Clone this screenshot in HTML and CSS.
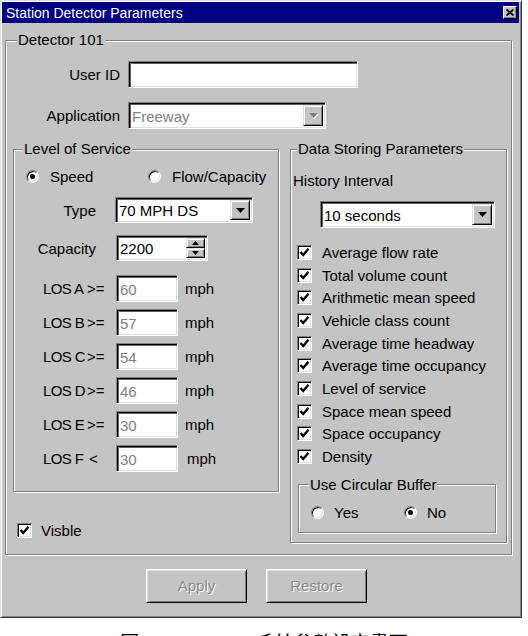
FILE: index.html
```html
<!DOCTYPE html>
<html lang="en">
<head>
<meta charset="utf-8">
<title>Station Detector Parameters</title>
<link rel="stylesheet" href="styles.css">
</head>
<body>
<div class="window">
  <div class="titlebar">
    <span class="title">Station Detector Parameters</span>
    <span class="close-btn">
      <svg width="8" height="7" viewBox="0 0 8 7"><path d="M0.5 0.5 L7.5 6.5 M7.5 0.5 L0.5 6.5" stroke="#000" stroke-width="1.8" fill="none"/></svg>
    </span>
  </div>

  <div class="client">
    <fieldset class="group detector">
      <legend>Detector 101</legend>
      <div class="detector-body">
        <div class="form-row">
          <span class="lbl">User ID</span>
          <div class="field userid"></div>
        </div>
        <div class="form-row app-row">
          <span class="lbl">Application</span>
          <div class="field combo app-combo disabled">
            <span class="combo-text">Freeway</span>
            <span class="drop-btn"><svg width="9" height="5" viewBox="0 0 9 5"><path d="M0 0 H9 L4.5 5 Z"/></svg></span>
          </div>
        </div>

        <div class="columns">
          <div class="col-left">
            <fieldset class="group los">
              <legend>Level of Service</legend>
              <div class="los-body">
                <div class="radio-row">
                  <span class="option speed-opt"><span class="radio on"></span><span>Speed</span></span>
                  <span class="option"><span class="radio"></span><span>Flow/Capacity</span></span>
                </div>
                <div class="param-row">
                  <span class="plbl">Type</span>
                  <div class="field combo type-combo">
                    <span class="combo-text">70 MPH DS</span>
                    <span class="drop-btn"><svg width="9" height="5" viewBox="0 0 9 5"><path d="M0 0 H9 L4.5 5 Z"/></svg></span>
                  </div>
                </div>
                <div class="param-row cap-row">
                  <span class="plbl">Capacity</span>
                  <div class="field spinner">
                    <span class="combo-text">2200</span>
                    <span class="spin">
                      <span class="spin-btn"><svg width="7" height="4" viewBox="0 0 7 4"><path d="M0 4 H7 L3.5 0 Z"/></svg></span>
                      <span class="spin-btn"><svg width="7" height="4" viewBox="0 0 7 4"><path d="M0 0 H7 L3.5 4 Z"/></svg></span>
                    </span>
                  </div>
                </div>
                <div class="los-grid">
                  <span class="los-name">LOS A</span><span class="op">&gt;=</span><div class="field los-field">60</div><span class="unit">mph</span>
                  <span class="los-name">LOS B</span><span class="op">&gt;=</span><div class="field los-field">57</div><span class="unit">mph</span>
                  <span class="los-name">LOS C</span><span class="op">&gt;=</span><div class="field los-field">54</div><span class="unit">mph</span>
                  <span class="los-name">LOS D</span><span class="op">&gt;=</span><div class="field los-field">46</div><span class="unit">mph</span>
                  <span class="los-name">LOS E</span><span class="op">&gt;=</span><div class="field los-field">30</div><span class="unit">mph</span>
                  <span class="los-name">LOS F</span><span class="op lt">&lt;</span><div class="field los-field">30</div><span class="unit unit-f">mph</span>
                </div>
              </div>
            </fieldset>
            <div class="check-row visible-row">
              <span class="check-box"><svg width="11" height="11" viewBox="0 0 11 11"><path d="M1.5 5 L4.2 8 L9.5 1.8" stroke="#000" stroke-width="2.4" fill="none"/></svg></span>
              <span>Visble</span>
            </div>
          </div>

          <fieldset class="group dsp">
            <legend>Data Storing Parameters</legend>
            <div class="dsp-body">
              <div class="history">History Interval</div>
              <div class="field combo interval-combo">
                <span class="combo-text">10 seconds</span>
                <span class="drop-btn"><svg width="9" height="5" viewBox="0 0 9 5"><path d="M0 0 H9 L4.5 5 Z"/></svg></span>
              </div>
              <div class="check-list">
                <div class="check-row"><span class="check-box"><svg width="11" height="11" viewBox="0 0 11 11"><path d="M1.5 5 L4.2 8 L9.5 1.8" stroke="#000" stroke-width="2.4" fill="none"/></svg></span><span>Average flow rate</span></div>
                <div class="check-row"><span class="check-box"><svg width="11" height="11" viewBox="0 0 11 11"><path d="M1.5 5 L4.2 8 L9.5 1.8" stroke="#000" stroke-width="2.4" fill="none"/></svg></span><span>Total volume count</span></div>
                <div class="check-row"><span class="check-box"><svg width="11" height="11" viewBox="0 0 11 11"><path d="M1.5 5 L4.2 8 L9.5 1.8" stroke="#000" stroke-width="2.4" fill="none"/></svg></span><span>Arithmetic mean speed</span></div>
                <div class="check-row"><span class="check-box"><svg width="11" height="11" viewBox="0 0 11 11"><path d="M1.5 5 L4.2 8 L9.5 1.8" stroke="#000" stroke-width="2.4" fill="none"/></svg></span><span>Vehicle class count</span></div>
                <div class="check-row"><span class="check-box"><svg width="11" height="11" viewBox="0 0 11 11"><path d="M1.5 5 L4.2 8 L9.5 1.8" stroke="#000" stroke-width="2.4" fill="none"/></svg></span><span>Average time headway</span></div>
                <div class="check-row"><span class="check-box"><svg width="11" height="11" viewBox="0 0 11 11"><path d="M1.5 5 L4.2 8 L9.5 1.8" stroke="#000" stroke-width="2.4" fill="none"/></svg></span><span>Average time occupancy</span></div>
                <div class="check-row"><span class="check-box"><svg width="11" height="11" viewBox="0 0 11 11"><path d="M1.5 5 L4.2 8 L9.5 1.8" stroke="#000" stroke-width="2.4" fill="none"/></svg></span><span>Level of service</span></div>
                <div class="check-row"><span class="check-box"><svg width="11" height="11" viewBox="0 0 11 11"><path d="M1.5 5 L4.2 8 L9.5 1.8" stroke="#000" stroke-width="2.4" fill="none"/></svg></span><span>Space mean speed</span></div>
                <div class="check-row"><span class="check-box"><svg width="11" height="11" viewBox="0 0 11 11"><path d="M1.5 5 L4.2 8 L9.5 1.8" stroke="#000" stroke-width="2.4" fill="none"/></svg></span><span>Space occupancy</span></div>
                <div class="check-row"><span class="check-box"><svg width="11" height="11" viewBox="0 0 11 11"><path d="M1.5 5 L4.2 8 L9.5 1.8" stroke="#000" stroke-width="2.4" fill="none"/></svg></span><span>Density</span></div>
              </div>
              <fieldset class="group circular">
                <legend>Use Circular Buffer</legend>
                <div class="circ-body">
                  <span class="option yes-opt"><span class="radio"></span><span>Yes</span></span>
                  <span class="option"><span class="radio on"></span><span>No</span></span>
                </div>
              </fieldset>
            </div>
          </fieldset>
        </div>
      </div>
    </fieldset>

    <div class="buttons">
      <span class="btn">Apply</span>
      <span class="btn">Restore</span>
    </div>
  </div>
</div>
<p class="caption">圖 3-7 Detector 系統參數設定畫面</p>
</body>
</html>
```

FILE: styles.css
```css
/* Classic dialog palette */
:root {
  --face: #c4c4c4;
  --shadow: #808080;
  --dark: #000;
  --light: #dfdfdf;
  --hilite: #fff;
}

body {
  margin: 0;
  background: #fff;
  font-family: "Liberation Sans", Arial, sans-serif;
  font-size: 15px;
  color: #000;
}

*, *::before, *::after { box-sizing: border-box; }

/* Window frame */
.window {
  width: 522px;
  height: 618px;
  background: var(--face);
  border: 1px solid;
  border-color: var(--light) #3a3a3a #3a3a3a var(--light);
  box-shadow: inset 1px 1px var(--hilite), inset -1px -1px var(--shadow);
  padding: 1px 2px 2px 1px;
}

.titlebar {
  height: 21px;
  background: #000080;
  color: #fff;
  font-size: 14px;
  display: flex;
  align-items: center;
  justify-content: space-between;
  padding: 0 2px 0 4px;
}

.close-btn {
  width: 14px;
  height: 13px;
  background: var(--face);
  border: 1px solid;
  border-color: var(--hilite) var(--dark) var(--dark) var(--hilite);
  box-shadow: inset -1px -1px var(--shadow);
  display: flex;
  align-items: center;
  justify-content: center;
}

.client {
  padding: 8px 0 0 3px;
}

/* Etched group boxes */
fieldset.group {
  margin: 0;
  padding: 0;
  min-width: 0;
  border: 1px solid var(--shadow);
  box-shadow: 1px 1px 0 var(--hilite), inset 1px 1px 0 var(--hilite);
}

fieldset.group > legend {
  padding: 0 1px;
  line-height: 18px;
  background: var(--face);
}

fieldset.detector { width: 507px; }
fieldset.detector > legend { margin-left: 11px; }
.detector-body { padding: 12px 3px 11px 7px; }

.form-row {
  display: flex;
  align-items: center;
  gap: 8px;
}
.app-row { margin-top: 14px; }
.lbl { width: 107px; text-align: right; }

/* Sunken edit fields */
.field {
  background: #fff;
  border: 1px solid;
  border-color: var(--shadow) var(--hilite) var(--hilite) var(--shadow);
  box-shadow: inset 1px 1px 0 #000, inset 2px 2px 0 #606060, inset -1px -1px 0 var(--light);
}

.userid { width: 230px; height: 27px; }

.combo, .spinner {
  display: flex;
  align-items: stretch;
  padding: 2px 2px 2px 3px;
}
.combo-text {
  flex: 1;
  display: flex;
  align-items: center;
  padding-top: 1px;
}
.disabled .combo-text { color: #808080; }

.drop-btn, .spin-btn {
  background: var(--face);
  border: 1px solid;
  border-color: var(--light) var(--dark) var(--dark) var(--light);
  box-shadow: inset 1px 1px var(--hilite), inset -1px -1px var(--shadow);
  display: flex;
  align-items: center;
  justify-content: center;
}
.drop-btn { width: 20px; }
.drop-btn svg, .spin-btn svg { fill: #000; }
.disabled .drop-btn svg { fill: #808080; filter: drop-shadow(1px 1px 0 #fff); }

.app-combo { width: 198px; height: 27px; }

.columns {
  display: flex;
  align-items: flex-start;
  gap: 11px;
  margin-top: 11px;
}

/* Level of Service */
.col-left { width: 266px; }
fieldset.los { width: 266px; }
fieldset.los > legend { margin-left: 9px; }
.los-body { padding: 10px 0 19px 0; }

.radio-row {
  display: flex;
  align-items: center;
  height: 17px;
  padding-left: 12px;
}
.option {
  display: flex;
  align-items: center;
  gap: 11px;
}
.speed-opt { width: 122px; }

.radio {
  flex: none;
  position: relative;
  width: 13px;
  height: 13px;
  border-radius: 50%;
  background: #fff;
  border: 1px solid;
  border-color: var(--shadow) var(--hilite) var(--hilite) var(--shadow);
  box-shadow: inset 1px 1px 0 #000, inset -1px -1px 0 var(--light);
}
.radio.on::after {
  content: "";
  position: absolute;
  left: 3px;
  top: 3px;
  width: 5px;
  height: 5px;
  border-radius: 50%;
  background: #000;
}

.param-row {
  display: flex;
  align-items: center;
  gap: 19px;
  margin-top: 12px;
}
.cap-row { gap: 20px; }
.plbl { width: 82px; text-align: right; }
.type-combo { width: 138px; height: 26px; }
.spinner { width: 92px; height: 26px; }
.spin {
  width: 19px;
  display: flex;
  flex-direction: column;
}
.spin-btn { flex: 1; }

.los-grid {
  display: grid;
  grid-template-columns: 43px 30px 62px auto;
  grid-auto-rows: 27px;
  row-gap: 7px;
  align-items: center;
  margin-top: 14px;
  padding-left: 29px;
  white-space: nowrap;
}
.los-name { letter-spacing: -0.6px; }
.op { padding-left: 1px; }
.lt { padding-left: 3px; }
.los-field {
  height: 27px;
  color: #808080;
  display: flex;
  align-items: center;
  padding: 1px 0 0 3px;
}
.unit { margin-left: 7px; }
.unit-f { margin-left: 9px; }

/* Check boxes */
.check-row {
  display: flex;
  align-items: center;
  gap: 10px;
}
.check-box {
  flex: none;
  width: 15px;
  height: 15px;
  background: #fff;
  border: 1px solid;
  border-color: var(--shadow) var(--hilite) var(--hilite) var(--shadow);
  box-shadow: inset 1px 1px 0 #000, inset -1px -1px 0 var(--light);
  display: flex;
  align-items: center;
  justify-content: center;
}
.visible-row {
  margin-top: 30px;
  padding-left: 4px;
  height: 16px;
  gap: 9px;
}

/* Data storing parameters */
fieldset.dsp { width: 217px; }
fieldset.dsp > legend { margin-left: 6px; }
.dsp-body { padding: 14px 0 9px 0; }
.history { line-height: 17px; padding-left: 2px; }
.interval-combo {
  width: 175px;
  height: 27px;
  margin: 12px 0 0 29px;
}
.check-list {
  margin-top: 13px;
  padding-left: 6px;
}
.check-list .check-row { height: 22.7px; }

fieldset.circular {
  width: 198px;
  margin: 8px 0 0 7px;
}
fieldset.circular > legend { margin-left: 10px; }
.circ-body {
  display: flex;
  align-items: center;
  height: 17px;
  box-sizing: content-box;
  padding: 10px 0 11px 12px;
}
.circ-body .option { gap: 10px; }
.yes-opt { width: 93px; }

/* Dialog buttons */
.buttons {
  display: flex;
  justify-content: center;
  gap: 19px;
  margin-top: 14px;
  padding-right: 11px;
}
.btn {
  width: 101px;
  height: 34px;
  display: flex;
  align-items: center;
  justify-content: center;
  border: 1px solid;
  border-color: var(--hilite) var(--dark) var(--dark) var(--hilite);
  box-shadow: inset 1px 1px var(--light), inset -1px -1px var(--shadow);
  color: #8a8a8a;
  text-shadow: 1px 1px 0 #fff;
}

/* Figure caption under the dialog */
.caption {
  width: 528px;
  margin: 14px 0 0;
  text-align: center;
  font-family: "Noto Sans CJK TC", "Noto Sans", sans-serif;
  font-size: 19px;
  line-height: 19px;
  color: #000;
}
```
